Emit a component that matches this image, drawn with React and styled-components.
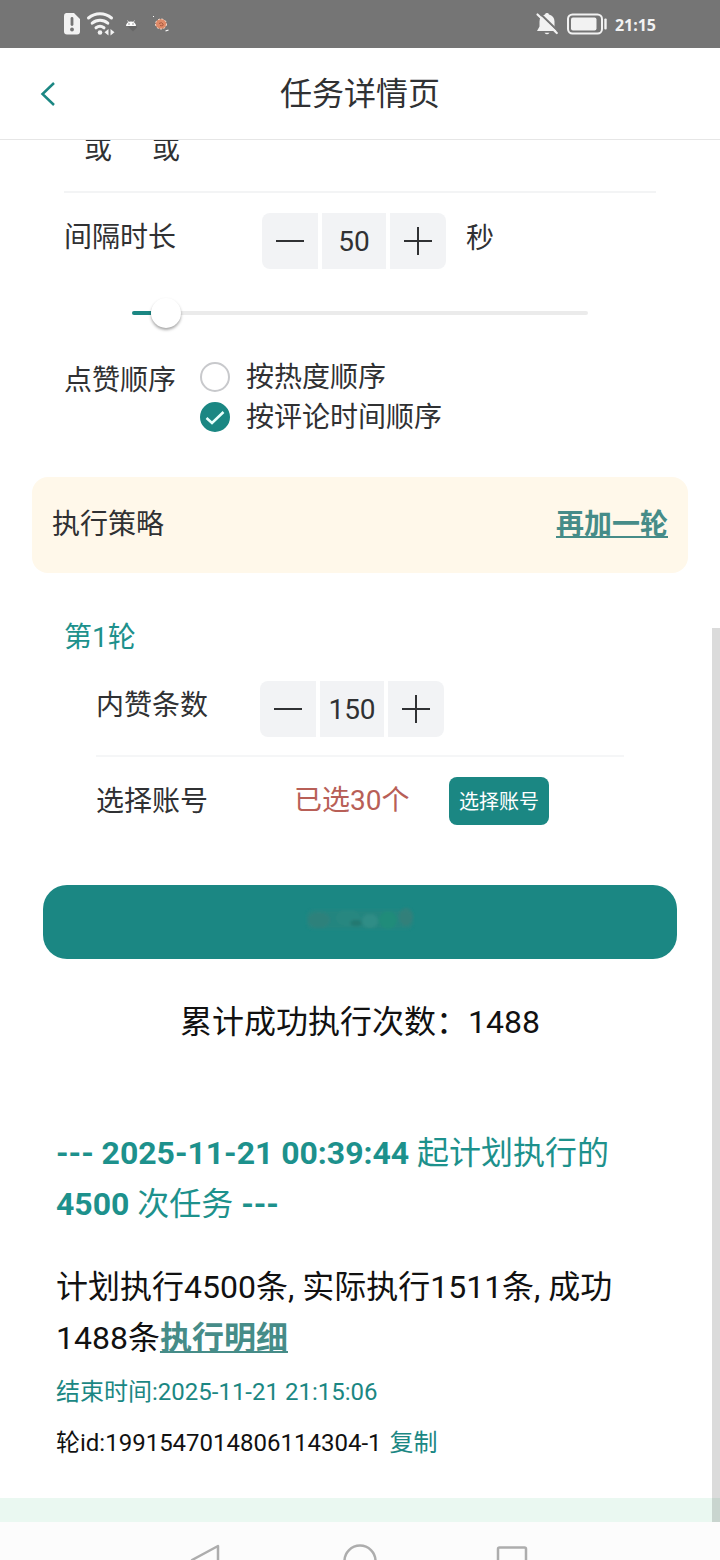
import React from 'react';
import styled, {createGlobalStyle, css} from 'styled-components';

const GlobalStyle = createGlobalStyle`
  * {
    box-sizing: border-box;
  }

  body {
    margin: 0;
    background: #fff;
    color: #303133;
    font-family: Roboto, "Noto Sans CJK SC", sans-serif;
    font-size: 28px;
    overflow: hidden;
  }
`;

const Screen = styled.div`
  display: flex;
  flex-direction: column;
  width: 720px;
  height: 1560px;
  overflow: hidden;
`;

const StatusBar = styled.div`
  display: flex;
  justify-content: space-between;
  flex: none;
  height: 48px;
  padding: 0 64px 0 62px;
  background: #757575;
`;

const StatusGroup = styled.div`
  display: flex;
  align-items: center;
`;

const Clock = styled.span`
  width: 41px;
  margin-left: 7px;
  padding-top: 2px;
  color: #f2f2f2;
  font: 700 16px/20px "Noto Sans", sans-serif;
  letter-spacing: -0.05px;
`;

const Header = styled.header`
  display: grid;
  grid-template-columns: 100px 1fr 100px;
  align-items: center;
  flex: none;
  height: 92px;
  border-bottom: 1px solid #e6e6e6;
`;

const BackButton = styled.button`
  display: flex;
  padding: 0 0 0 38px;
  border: 0;
  background: none;
`;

const Title = styled.h1`
  margin: 0;
  font-size: 32px;
  font-weight: 400;
  line-height: 48px;
  text-align: center;
`;

const Content = styled.main`
  position: relative;
  flex: none;
  height: 1382px;
  overflow: hidden;
`;

const ScrollThumb = styled.div`
  position: absolute;
  right: 0;
  bottom: 0;
  width: 8px;
  height: 894px;
  background: rgba(0, 0, 0, 0.14);
`;

const KeywordRow = styled.div`
  display: flex;
  gap: 40px;
  height: 53px;
  margin: 0 64px;
  padding-left: 20px;
  border-bottom: 2px solid #f3f4f5;
  line-height: 20px;
`;

const Row = styled.div`
  display: flex;
  align-items: flex-start;
  height: ${props => props.height}px;
  padding: ${props => props.pad};
  line-height: 40px;
`;

const Label = styled.span`
  flex: none;
  width: ${props => props.width}px;
  padding-top: ${props => props.top || 0}px;
`;

const Unit = styled.span`
  padding: 6px 0 0 20px;
`;

const StepperBox = styled.div`
  display: flex;
  gap: 4px;
`;

const stepperCell = css`
  display: flex;
  align-items: center;
  justify-content: center;
  height: 56px;
  background: #f2f3f5;
`;

const StepButton = styled.button`
  ${stepperCell}
  width: 56px;
  padding: 0;
  border: 0;
  border-radius: ${props => (props.right ? '0 8px 8px 0' : '8px 0 0 8px')};
`;

const StepValue = styled.span`
  ${stepperCell}
  width: 64px;
  padding-top: 2px;
`;

const SliderTrack = styled.div`
  display: flex;
  align-items: center;
  width: 456px;
  height: 4px;
  margin: 42px 0 0 132px;
  border-radius: 2px;
  background: #ebebeb;
`;

const SliderFill = styled.div`
  width: 19px;
  height: 4px;
  border-radius: 2px 0 0 2px;
  background: #1b8783;
`;

const SliderThumb = styled.div`
  width: 30px;
  height: 30px;
  border-radius: 50%;
  background: #fff;
  box-shadow: 0 2px 3px rgba(0, 0, 0, 0.35);
`;

const RadioGroup = styled.div`
  display: flex;
  flex-direction: column;
`;

const RadioItem = styled.label`
  display: flex;
  align-items: center;
  gap: 16px;
  height: 40px;
  line-height: 40px;
`;

const RadioText = styled.span`
  margin-top: 1px;
`;

const RadioDot = styled.span`
  display: flex;
  align-items: center;
  justify-content: center;
  width: 30px;
  height: 30px;
  border: 2px solid ${props => (props.checked ? '#1b8783' : '#c8c9cc')};
  border-radius: 50%;
  background: ${props => (props.checked ? '#1b8783' : '#fff')};
`;

const StrategyBar = styled.div`
  display: flex;
  justify-content: space-between;
  height: 96px;
  margin: 0 32px;
  padding: 0 20px;
  border-radius: 16px;
  background: #fff8ea;
  line-height: 96px;
`;

const Link = styled.a`
  color: #468c88;
  font-weight: 700;
  text-decoration: underline;
  text-decoration-thickness: 2px;
  text-underline-offset: 2px;
`;

const RoundTitle = styled.div`
  padding: 45px 0 0 64px;
  color: #1d918c;
  line-height: 40px;
`;

const Divider = styled.div`
  height: 2px;
  margin: 0 96px;
  background: #f5f6f7;
`;

const Selected = styled.span`
  width: 155px;
  color: #b85f57;
`;

const SelectButton = styled.button`
  width: 100px;
  height: 48px;
  padding: 1px 0 0;
  border: 0;
  border-radius: 8px;
  background: #1b8783;
  color: #fff;
  font: inherit;
  font-size: 20px;
`;

const SubmitButton = styled.button`
  display: flex;
  justify-content: center;
  width: 634px;
  height: 74px;
  margin: 0 43px;
  padding: 20px 0 0;
  border: 0;
  border-radius: 24px;
  background: #1b8783;
`;

const Total = styled.p`
  margin: 39px 0 0;
  color: #111;
  font-size: 32px;
  line-height: 48px;
  text-align: center;
`;

const Log = styled.section`
  padding: 82px 56px 0;
  color: #111;
  font-size: 32px;
  line-height: 51px;
`;

const LogHead = styled.div`
  color: #1d918c;

  b {
    letter-spacing: -0.04px;
  }
`;

const LogBody = styled.div`
  margin-top: 32px;
  margin-bottom: 3px;
`;

const LogMeta = styled.div`
  color: ${props => (props.accent ? '#1b8783' : '#111')};
  font-size: 24px;
  line-height: 51px;
`;

const CopyLink = styled.span`
  margin-left: 8px;
  color: #1b8783;
`;

const BottomStrip = styled.div`
  height: 24px;
  margin-top: 29px;
  background: #eaf8f1;
`;

const NavBar = styled.nav`
  display: flex;
  justify-content: center;
  gap: 116px;
  flex: none;
  height: 38px;
  padding-top: 20px;
  background: #fcfcfc;
`;

const SimIcon = () => (
  <svg width="20" height="24" viewBox="0 0 20 24">
    <path d="M4 1h8l6 6v12.500a3 3 0 0 1-3 3H5a3 3 0 0 1-3-3V4a3 3 0 0 1 2-3z" fill="#f2f2f2"/>
    <path d="M10 6.500v6" stroke="#757575" strokeWidth="2.800" strokeLinecap="round"/>
    <circle cx="10" cy="17.500" r="1.900" fill="#757575"/>
  </svg>
);

const WifiIcon = () => (
  <svg width="30" height="26" viewBox="0 0 30 26" style={{marginLeft: 4}}>
    <g fill="none" stroke="#f2f2f2" strokeWidth="3" strokeLinecap="round">
      <path d="M2.500 7a18 18 0 0 1 23 0"/>
      <path d="M6.200 12.200a12 12 0 0 1 15.600 0"/>
      <path d="M10 16.800a6.500 6.500 0 0 1 8 0"/>
    </g>
    <circle cx="14" cy="21.500" r="2.300" fill="#f2f2f2"/>
    <path d="M22.500 18v6.500L18.500 21.200zM24.500 18v6.500L28.500 21.200z" fill="#f2f2f2"/>
  </svg>
);

const AndroidIcon = () => (
  <svg width="16" height="16" viewBox="0 0 16 16" style={{marginLeft: 7}}>
    <path d="M4 9.500h9l1 2-4 4z" fill="#676767"/>
    <path d="M3 10a5 4.600 0 0 1 10 0z" fill="#fff"/>
    <path d="M4.500 4.500l1.500 2M11.500 4.500l-1.500 2" stroke="#fff" strokeWidth=".7"/>
    <circle cx="6" cy="8" r=".7" fill="#757575"/>
    <circle cx="10" cy="8" r=".7" fill="#757575"/>
  </svg>
);

const CometIcon = () => (
  <svg width="20" height="20" viewBox="0 0 20 20" style={{marginLeft: 12}}>
    <ellipse cx="10" cy="10" rx="5.500" ry="5" fill="#df8a68" stroke="#f8dfd0" strokeDasharray="2 1.500"/>
    <path d="M8 9.500q3-2 4 .5t-3 1.500" fill="none" stroke="#a85a42"/>
    <path d="M2 2.500h1M14.500 17l3-1" stroke="#fff" strokeWidth="1.200"/>
  </svg>
);

const BellOffIcon = () => (
  <svg width="24" height="24" viewBox="0 0 24 24">
    <path d="M12 1a2 2 0 0 1 2 1.400c3.500.9 5.500 3.600 5.500 7v5l2.500 4.600H2l2.500-4.600v-5c0-3.400 2-6.100 5.500-7a2 2 0 0 1 2-1.400zM9.500 20.700h5q-2.500 3-5 0z" fill="#f2f2f2"/>
    <path d="M4 .5L23.500 19.500" stroke="#757575" strokeWidth="2"/>
    <path d="M2.500 2.500L21.800 21" stroke="#f2f2f2" strokeWidth="2.200" strokeLinecap="round"/>
  </svg>
);

const BatteryIcon = () => (
  <svg width="42" height="24" viewBox="0 0 42 24" style={{marginLeft: 7}}>
    <rect x="2" y="2.500" width="34" height="19" rx="4.500" fill="none" stroke="#f2f2f2" strokeWidth="2"/>
    <rect x="5" y="5.500" width="25.500" height="13" rx="2" fill="#f2f2f2"/>
    <rect x="38.300" y="6.500" width="2.400" height="11" rx="1" fill="#f2f2f2"/>
  </svg>
);

const StepIcon = ({plus}) => (
  <svg width="28" height="28" viewBox="0 0 28 28">
    <path d={plus ? 'M0 14h28M14 0v28' : 'M0 14h28'} stroke="#303133" strokeWidth="2"/>
  </svg>
);

const Stepper = ({value}) => (
  <StepperBox>
    <StepButton><StepIcon/></StepButton>
    <StepValue>{value}</StepValue>
    <StepButton right><StepIcon plus/></StepButton>
  </StepperBox>
);

const Radio = ({label, checked}) => (
  <RadioItem>
    <RadioDot checked={checked}>
      {checked &&
      <svg width="20" height="16" viewBox="0 0 20 16" style={{flex: 'none'}}>
        <path d="M1.500 9l5.500 5L18.500 3" fill="none" stroke="#e8fffc" strokeWidth="2.500"/>
      </svg>}
    </RadioDot>
    <RadioText>{label}</RadioText>
  </RadioItem>
);

// the caption is rubbed out, only faint smudges are left on the button
const Smudge = () => (
  <svg width="112" height="28" viewBox="0 0 112 28">
    <defs>
      <filter id="soft"><feGaussianBlur stdDeviation="1.8"/></filter>
    </defs>
    <g filter="url(#soft)" opacity=".8">
      <rect x="3" y="5" width="106" height="19" rx="6" fill="#27857f"/>
      <ellipse cx="15" cy="15" rx="11" ry="8" fill="#33807a"/>
      <ellipse cx="44" cy="13" rx="12" ry="8" fill="#2c8780"/>
      <ellipse cx="52" cy="18" rx="6" ry="3" fill="#28756c"/>
      <ellipse cx="66" cy="16" rx="8" ry="7" fill="#368f87"/>
      <ellipse cx="84" cy="15" rx="9" ry="9" fill="#248e78"/>
      <ellipse cx="102" cy="12" rx="7" ry="9" fill="#397f79"/>
    </g>
  </svg>
);


const App = () => (
  <Screen>
    <GlobalStyle/>
    <StatusBar>
      <StatusGroup>
        <SimIcon/>
        <WifiIcon/>
        <AndroidIcon/>
        <CometIcon/>
      </StatusGroup>
      <StatusGroup>
        <BellOffIcon/>
        <BatteryIcon/>
        <Clock>21:15</Clock>
      </StatusGroup>
    </StatusBar>

    <Header>
      <BackButton>
        <svg width="20" height="28" viewBox="0 0 20 28">
          <path d="M16 3L4.500 14 16 25" fill="none" stroke="#1b8783" strokeWidth="2.500"/>
        </svg>
      </BackButton>
      <Title>任务详情页</Title>
    </Header>

    <Content>
      <KeywordRow>
        <span>或</span>
        <span>或</span>
      </KeywordRow>
      <Row height={76} pad="20px 64px 0">
        <Label width={198} top={5}>间隔时长</Label>
        <Stepper value={50}/>
        <Unit>秒</Unit>
      </Row>
      <SliderTrack>
        <SliderFill/>
        <SliderThumb/>
      </SliderTrack>
      <Row height={162} pad="42px 64px 0">
        <Label width={136} top={4}>点赞顺序</Label>
        <RadioGroup>
          <Radio label="按热度顺序"/>
          <Radio label="按评论时间顺序" checked/>
        </RadioGroup>
      </Row>

      <StrategyBar>
        <span>执行策略</span>
        <Link>再加一轮</Link>
      </StrategyBar>

      <RoundTitle>第1轮</RoundTitle>
      <Row height={97} pad="23px 96px 0">
        <Label width={164} top={5}>内赞条数</Label>
        <Stepper value={150}/>
      </Row>
      <Divider/>
      <Row height={128} pad="20px 96px 0">
        <Label width={198} top={5}>选择账号</Label>
        <Label as={Selected} style={{paddingTop: 4}}>已选30个</Label>
        <SelectButton>选择账号</SelectButton>
      </Row>

      <SubmitButton><Smudge/></SubmitButton>
      <Total>累计成功执行次数：1488</Total>

      <Log>
        <LogHead>
          <b>--- 2025-11-21 00:39:44</b> 起计划执行的<br/>
          <b>4500</b> 次任务 <b>---</b>
        </LogHead>
        <LogBody>
          计划执行4500条, 实际执行1511条, 成功<br/>
          1488条<Link>执行明细</Link>
        </LogBody>
        <LogMeta accent>结束时间:2025-11-21 21:15:06</LogMeta>
        <LogMeta>轮id:1991547014806114304-1<CopyLink>复制</CopyLink></LogMeta>
      </Log>
      <BottomStrip/>
      <ScrollThumb/>
    </Content>

    <NavBar>
      <svg width="36" height="36" viewBox="0 0 36 36">
        <path d="M28 4v28L2 18z" fill="none" stroke="#adadad" strokeWidth="2.500" strokeLinejoin="round"/>
      </svg>
      <svg width="36" height="36" viewBox="0 0 36 36">
        <circle cx="18" cy="19" r="15.500" fill="none" stroke="#adadad" strokeWidth="2.500"/>
      </svg>
      <svg width="36" height="36" viewBox="0 0 36 36">
        <rect x="4" y="5.500" width="28" height="28" rx="1.500" fill="none" stroke="#adadad" strokeWidth="2.500"/>
      </svg>
    </NavBar>
  </Screen>
);


export default App;
